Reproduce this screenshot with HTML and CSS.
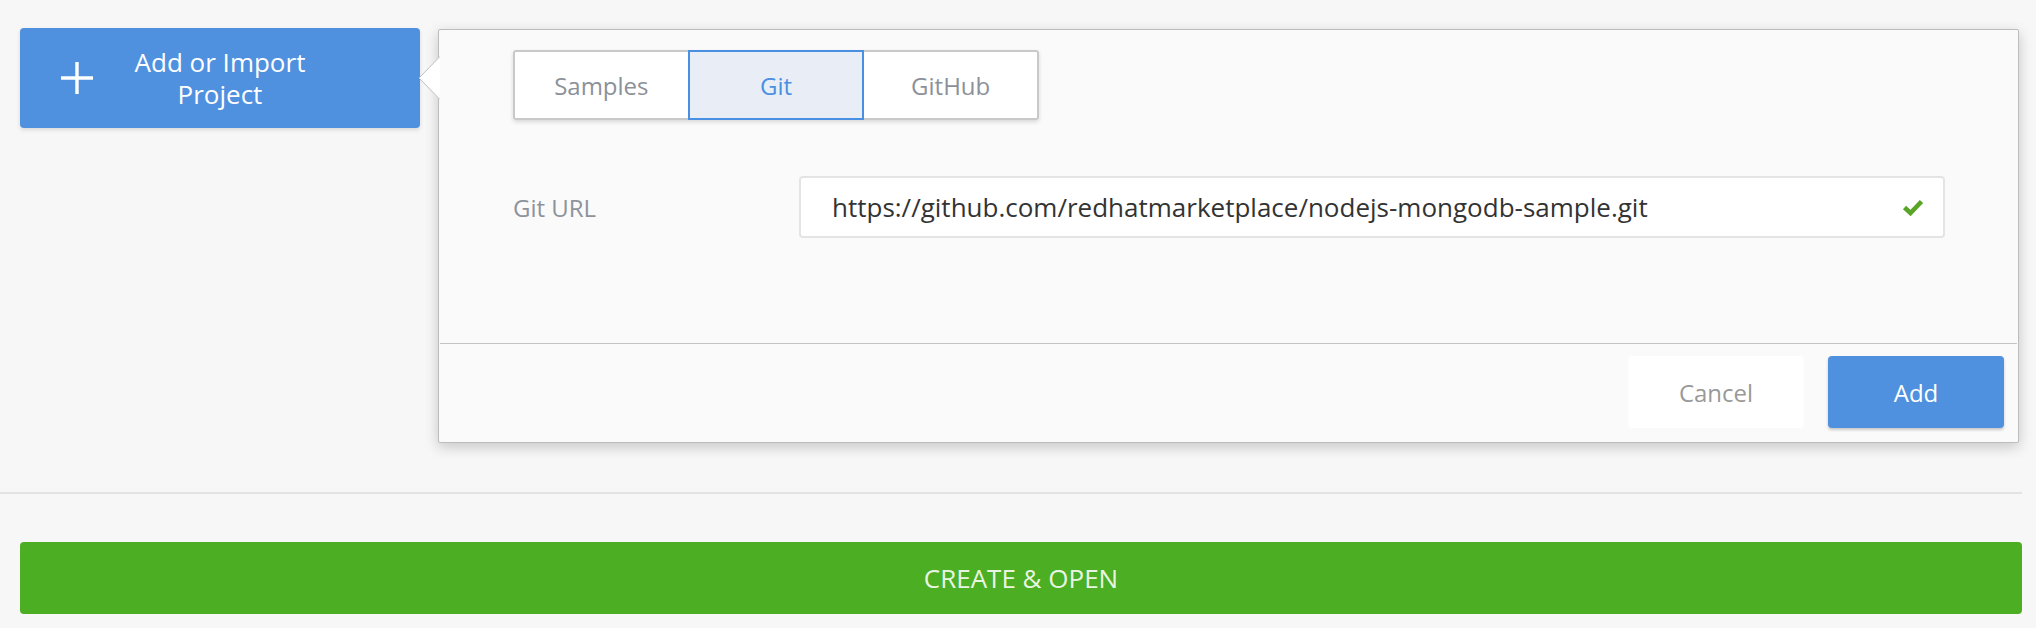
FILE: index.html
```html
<!DOCTYPE html>
<html lang="en">
<head>
<meta charset="utf-8">
<title>Add or Import Project</title>
<link rel="stylesheet" href="styles.css">
</head>
<body>
<div class="page">
  <div class="top">
    <button class="add-import" type="button">
      <svg class="plus" viewBox="0 0 34 34" aria-hidden="true">
        <path d="M17 1 V33 M1 17 H33" stroke="#fff" stroke-width="3.4" fill="none"/>
      </svg>
      <span class="add-label">Add or Import Project</span>
      <span class="add-spacer"></span>
    </button>
    <div class="popover">
      <svg class="arrow" viewBox="0 0 22 44" aria-hidden="true">
        <polygon points="22,0 1,22 22,44" fill="#fff"/>
        <polyline points="22,0.5 1,22 22,43.5" fill="none" stroke="#bdbdbd" stroke-width="1"/>
      </svg>
      <div class="pop-body">
        <div class="tabs">
          <div class="tab">Samples</div>
          <div class="tab active">Git</div>
          <div class="tab">GitHub</div>
        </div>
        <div class="form-row">
          <label class="field-label">Git URL</label>
          <div class="input">
            <span class="input-text">https://github.com/redhatmarketplace/nodejs-mongodb-sample.git</span>
            <svg class="check" viewBox="0 0 22 17" aria-hidden="true">
              <path d="M2.5 8.5 L8.5 14 L19.5 2.5" stroke="#5aa527" stroke-width="4.6" fill="none"/>
            </svg>
          </div>
        </div>
      </div>
      <div class="pop-footer">
        <button class="btn btn-cancel" type="button">Cancel</button>
        <button class="btn btn-add" type="button">Add</button>
      </div>
    </div>
  </div>
  <hr class="sep">
  <button class="create" type="button">CREATE &amp; OPEN</button>
</div>
</body>
</html>
```

FILE: styles.css
```css
* { box-sizing: border-box; }

html, body {
  margin: 0;
  background: #f7f7f7;
  font-family: "Open Sans", "Noto Sans", sans-serif;
}

.page {
  width: 2022px;
}

.top {
  display: flex;
  align-items: flex-start;
  padding: 28px 0 0 20px;
}

.add-import {
  flex: none;
  width: 400px;
  height: 100px;
  padding: 0;
  display: grid;
  grid-template-columns: 1fr auto 1fr;
  align-items: center;
  background: #4f91df;
  border: 0;
  border-radius: 4px;
  color: #fff;
  font-family: "Open Sans", sans-serif;
  font-size: 26px;
  line-height: 32px;
  box-shadow: 0 2px 4px rgba(0, 0, 0, 0.12);
}

.plus {
  justify-self: start;
  margin-left: 40px;
  width: 34px;
  height: 34px;
}

.add-label {
  width: 190px;
  text-align: center;
}

.popover {
  position: relative;
  flex: none;
  margin: 1px 0 0 18px;
  width: 1581px;
  height: 414px;
  background: #fafafa;
  border: 1px solid #bdbdbd;
  border-radius: 2px;
  box-shadow: 0 4px 14px rgba(0, 0, 0, 0.2);
  display: flex;
  flex-direction: column;
}

.arrow {
  position: absolute;
  left: -21px;
  top: 26px;
  width: 22px;
  height: 44px;
}

.pop-body {
  flex: 1;
  padding: 20px 0 0 74px;
}

.tabs {
  display: flex;
  width: 526px;
  height: 70px;
  border-radius: 3px;
  background: #fff;
  box-shadow: 0 2px 4px rgba(0, 0, 0, 0.14);
}

.tab {
  flex: 1;
  display: flex;
  align-items: center;
  justify-content: center;
  border: 2px solid #c9c9c9;
  background: #fff;
  color: #8c9199;
  font-size: 24px;
}

.tab + .tab { margin-left: -2px; }
.tab:first-child { border-radius: 3px 0 0 3px; }
.tab:last-child { border-radius: 0 3px 3px 0; }

.tab.active {
  position: relative;
  background: #e9eef6;
  border-color: #4a90e2;
  color: #4a90e2;
}

.form-row {
  display: flex;
  align-items: center;
  margin-top: 56px;
}

.field-label {
  flex: 0 0 286px;
  color: #8d939a;
  font-size: 24px;
}

.input {
  width: 1146px;
  height: 62px;
  display: flex;
  align-items: center;
  justify-content: space-between;
  padding: 0 19px 0 31px;
  background: #fff;
  border: 2px solid #e4e4e4;
  border-radius: 4px;
}

.input-text {
  color: #333;
  font-size: 26px;
}

.check {
  width: 22px;
  height: 17px;
}

.pop-footer {
  margin: 0 1px;
  border-top: 1px solid #c4c4c4;
  display: flex;
  justify-content: flex-end;
  gap: 24px;
  padding: 12px 13px 14px;
}

.btn {
  width: 176px;
  height: 72px;
  border: 0;
  border-radius: 4px;
  font-family: "Open Sans", sans-serif;
  font-size: 24px;
}

.btn-cancel {
  background: #fff;
  color: #999;
}

.btn-add {
  background: #4f91df;
  color: #fff;
  box-shadow: 0 2px 3px rgba(0, 0, 0, 0.2);
}

.sep {
  margin: 49px 0 0;
  height: 2px;
  border: 0;
  background: #e3e3e3;
}

.create {
  display: block;
  margin: 48px 0 0 20px;
  width: 2002px;
  height: 72px;
  border: 0;
  border-radius: 4px;
  background: #4cae22;
  color: rgba(255, 255, 255, 0.9);
  font-family: "Open Sans", sans-serif;
  font-size: 26px;
}
```
